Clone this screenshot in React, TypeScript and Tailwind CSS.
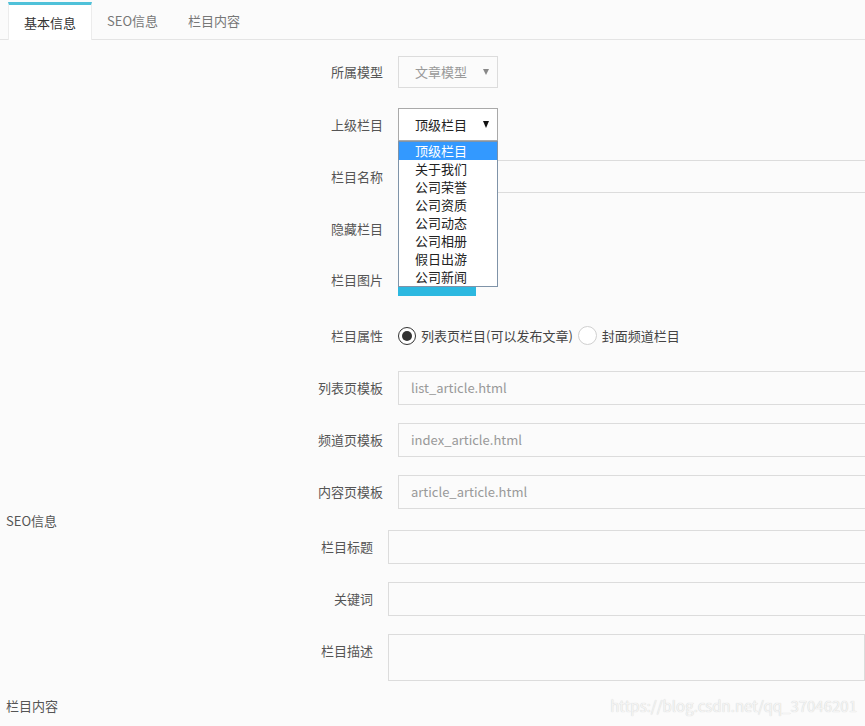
import React from "react"

const parents = ["顶级栏目", "关于我们", "公司荣誉", "公司资质", "公司动态", "公司相册", "假日出游", "公司新闻"]

function Row({ label, labelWidth = "w-[383px]", className = "", children }: { label: string; labelWidth?: string; className?: string; children?: React.ReactNode }) {
  return (
    <div className={`relative flex items-center ${className}`}>
      <label className={`${labelWidth} shrink-0 text-right text-[13px] text-[#555]`}>{label}</label>
      <div className="ml-[15px] flex h-full items-center">{children}</div>
    </div>
  )
}

function TextInput({ placeholder = "", h = "h-[34px]" }: { placeholder?: string; h?: string }) {
  return (
    <div className={`${h} w-[490px] border border-[#dcdcdc] bg-[#fbfbfb] pl-[12px] text-[13px] leading-[32px] text-[#999]`}>
      {placeholder}
    </div>
  )
}

export default function App() {
  return (
    <div
      className="relative h-[726px] w-full overflow-hidden bg-[#fbfbfb]"
      style={{ fontFamily: '"Microsoft YaHei","Noto Sans CJK SC",sans-serif' }}
    >
      {/* tabs */}
      <div className="flex h-[40px] items-end border-b border-[#e4e4e4] pl-[8px]">
        <div className="-mb-px flex h-[38px] items-center border-x border-t-[3px] border-x-[#ececec] border-t-[#4fc1d9] bg-white px-[15px] text-[13px] text-[#333]">
          基本信息
        </div>
        <div className="flex h-[37px] items-center px-[15px] text-[13px] text-[#777]">SEO信息</div>
        <div className="flex h-[37px] items-center px-[15px] text-[13px] text-[#777]">栏目内容</div>
      </div>

      <div className="flex flex-col pt-[16px]">
        <Row label="所属模型" className="mb-[20px] h-[32px]">
          <div className="flex h-[32px] w-[100px] items-center justify-between border border-[#dcdcdc] bg-[#fbfbfb] pl-[16px] pr-[8px] text-[13px] text-[#999]">
            <span>文章模型</span>
            <span className="h-0 w-0 border-x-[3px] border-t-[6px] border-x-transparent border-t-[#888]" />
          </div>
        </Row>

        <Row label="上级栏目" className="z-10 mb-[19px] h-[33px]">
          <div className="relative">
            <div className="flex h-[33px] w-[100px] items-center justify-between border border-[#a9a9a9] bg-white pl-[16px] pr-[8px] text-[13px] text-[#222]">
              <span>顶级栏目</span>
              <span className="h-0 w-0 border-x-[3.5px] border-t-[7px] border-x-transparent border-t-[#111]" />
            </div>
            <ul className="absolute left-0 top-[33px] w-[100px] border border-[#7f93a8] bg-white py-0">
              {parents.map((p, i) => (
                <li
                  key={p}
                  className={`h-[18px] pl-[16px] text-[13px] leading-[18px] ${i === 0 ? "bg-[#3399ff] text-white" : "text-[#222]"}`}
                >
                  {p}
                </li>
              ))}
            </ul>
          </div>
        </Row>

        <Row label="栏目名称" className="mb-[19px] h-[33px]">
          <TextInput h="h-[33px]" />
        </Row>

        <Row label="隐藏栏目" className="mb-[19px] h-[33px]" />

        <Row label="栏目图片" className="mb-[23px] h-[32px]">
          <div className="h-[31px] w-[78px] bg-[#2cb8e0]" />
        </Row>

        <Row label="栏目属性" className="mb-[19px] h-[33px]">
          <div className="flex items-center text-[13px] text-[#444]">
            <span className="flex h-[18px] w-[18px] items-center justify-center rounded-full border-[1.5px] border-[#333] bg-white">
              <span className="h-[10px] w-[10px] rounded-full bg-[#333]" />
            </span>
            <span className="ml-[5px]">列表页栏目(可以发布文章)</span>
            <span className="ml-[5px] h-[19px] w-[19px] rounded-full border border-[#d0d0d0] bg-white" />
            <span className="ml-[5px]">封面频道栏目</span>
          </div>
        </Row>

        <Row label="列表页模板" className="mb-[18px] h-[34px]">
          <TextInput placeholder="list_article.html" />
        </Row>
        <Row label="频道页模板" className="mb-[18px] h-[34px]">
          <TextInput placeholder="index_article.html" />
        </Row>
        <Row label="内容页模板" className="h-[34px]">
          <TextInput placeholder="article_article.html" />
        </Row>

        <div className="mt-[2px] h-[19px] pl-[6px] text-[13px] leading-[19px] text-[#555]">SEO信息</div>

        <Row label="栏目标题" labelWidth="w-[373px]" className="mb-[18px] h-[34px]">
          <TextInput />
        </Row>
        <Row label="关键词" labelWidth="w-[373px]" className="mb-[18px] h-[34px]">
          <TextInput />
        </Row>
        <div className="flex">
          <label className="w-[373px] shrink-0 pt-[7px] text-right text-[13px] text-[#555]">栏目描述</label>
          <div className="ml-[15px] h-[47px] w-[490px] border border-[#dcdcdc] bg-[#fbfbfb]" />
        </div>

        <div className="mt-[16px] h-[18px] pl-[6px] text-[13px] leading-[18px] text-[#555]">栏目内容</div>
      </div>

      <div className="absolute bottom-[9px] right-[8px] text-[15px] text-[#f4f4f4] [text-shadow:0_0_1px_#c8c8c8]">
        https://blog.csdn.net/qq_37046201
      </div>
    </div>
  )
}
